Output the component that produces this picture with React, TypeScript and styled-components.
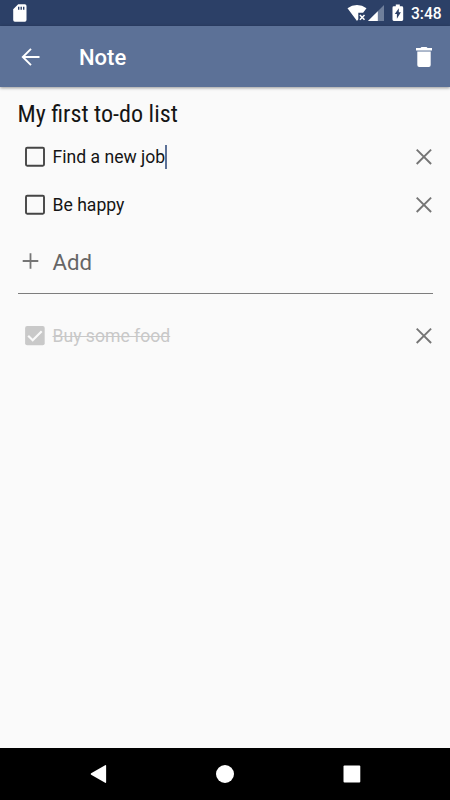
import React from 'react';
import styled, { createGlobalStyle } from 'styled-components';

const GlobalStyle = createGlobalStyle`
  * { box-sizing: border-box; }
  body { margin: 0; background: #fafafa; }
`;

const Screen = styled.div`
  display: flex;
  flex-direction: column;
  width: 450px;
  height: 800px;
  overflow: hidden;
  background: #fafafa;
  font-family: Roboto, sans-serif;
  color: #151515;
`;

const StatusBar = styled.header`
  display: flex;
  flex: none;
  align-items: center;
  height: 26px;
  padding: 0 9px 0 12px;
  background: #2c4067;
`;

const StatusIcons = styled.div`
  display: flex;
  align-items: center;
  margin-left: auto;
`;

const Clock = styled.span`
  width: 30px;
  margin-left: 7px;
  padding-top: 2px;
  color: #fff;
  font-size: 15.6px;
  font-weight: 500;
  line-height: 26px;
  white-space: nowrap;
`;

const AppBar = styled.nav`
  display: flex;
  flex: none;
  align-items: center;
  height: 61px;
  padding: 0 12px 0 17px;
  background: #5c7197;
  box-shadow: 0 1px 3px rgba(0, 0, 0, 0.4);
`;

const AppTitle = styled.h1`
  flex: 1;
  margin: 3px 0 0 34px;
  color: #fff;
  font-size: 22px;
  font-weight: 500;
  line-height: 30px;
`;

const IconButton = styled.button`
  display: flex;
  flex: none;
  padding: 0;
  border: 0;
  background: none;
`;

const Note = styled.main`
  flex: 1;
  padding: 10px 12px 0 17.5px;
`;

const NoteTitle = styled.h2`
  margin: 0;
  height: 35.6px;
  font-family: 'Roboto Condensed', Roboto, sans-serif;
  font-size: 24.1px;
  font-stretch: 75%;
  font-weight: 400;
  line-height: 34px;
  white-space: nowrap;
`;

const Item = styled.div`
  display: flex;
  align-items: center;
  height: 48px;
  padding-left: 5.5px;
`;

const ItemText = styled.span<{ $done?: boolean }>`
  display: flex;
  flex: 1;
  align-items: center;
  margin-left: 5.5px;
  font-size: 17.6px;
  line-height: 24px;
  color: ${(p) => (p.$done ? '#c8c8c8' : '#151515')};
  text-decoration: ${(p) => (p.$done ? 'line-through' : 'none')};
  text-decoration-thickness: 1px;
`;

const Caret = styled.span`
  flex: none;
  width: 2px;
  height: 24px;
  margin-left: -0.5px;
  background: #5c7197;
`;

const AddRow = styled.button`
  display: flex;
  align-items: center;
  width: 100%;
  height: 64.4px;
  padding: 0 0 0 0.5px;
  border: 0;
  background: none;
  color: #666;
  font-family: inherit;
  font-size: 22.2px;
  line-height: 30px;
`;

const AddLabel = styled.span`
  margin: 2px 0 0 10.5px;
`;

const Divider = styled.hr`
  height: 1px;
  margin: 0 5.5px 18px 0;
  border: 0;
  background: #7d7d7d;
`;

const NavBar = styled.footer`
  display: flex;
  flex: none;
  align-items: center;
  justify-content: space-between;
  height: 52px;
  padding: 0 88px 0 88px;
  background: #000;
`;

const Checkbox = ({ checked = false }: { checked?: boolean }) => (
  <svg width="24" height="24" viewBox="0 0 24 24">
    {checked ? (
      <>
        <rect x="2.1" y="1.9" width="19.6" height="19.4" rx="2" fill="#c9c9c9" />
        <path d="M5.2 11.8l4.5 4.4 9-9" fill="none" stroke="#fafafa" strokeWidth="2.2" />
      </>
    ) : (
      <rect x="3" y="2.8" width="18" height="18" rx="1.2" fill="none" stroke="#454545" strokeWidth="1.9" />
    )}
  </svg>
);

const RemoveButton = () => (
  <IconButton aria-label="Remove">
    <svg width="27" height="27" viewBox="0 0 27 27">
      <path d="M5.7 6.6l14.4 14.4M20.1 6.6L5.7 21" stroke="#757575" strokeWidth="1.9" />
    </svg>
  </IconButton>
);

const BackIcon = () => (
  <svg width="28" height="28" viewBox="0 0 28 28">
    <path d="M22.5 14H6.3M14 5.8L5.8 14l8.2 8.2" fill="none" stroke="#fff" strokeWidth="1.9" />
  </svg>
);

const TrashIcon = () => (
  <svg width="28" height="28" viewBox="0 0 28 28">
    <path d="M7.3 8.9h13.4v13.2q0 1.9-1.9 1.9H9.2q-1.9 0-1.9-1.9zM6 5h4.4l1.1-1h5l1.1 1H22v2.4H6z" fill="#fff" />
    <path d="M7.3 7.4h13.4v1.5H7.3z" fill="#b4bfd1" />
  </svg>
);

const StorageIcon = () => (
  <svg width="16" height="20" viewBox="0 0 16 20">
    <path d="M6.2 1.3h6.6q1.7 0 1.7 1.7v14q0 1.7-1.7 1.7H2.9q-1.7 0-1.7-1.7V6.3z" fill="#fff" />
    <path d="M6.7 3.8v3M9.2 3.8v3M11.7 3.8v3" stroke="#2c4067" strokeWidth="1.4" />
  </svg>
);

const WifiIcon = () => (
  <svg width="20" height="18" viewBox="0 0 20 18">
    <path d="M0.5 4.2Q4.8 1 10 1t9.5 3.2L16.1 8.8h-4.8v6.5L10 17z" fill="#fff" />
    <path d="M12.9 11l4.6 4.7M17.5 11l-4.6 4.7" stroke="#fff" strokeWidth="1.5" />
  </svg>
);

const SignalIcon = () => (
  <svg width="16" height="18" viewBox="0 0 16 18">
    <path d="M16 1v16H0z" fill="#6f7f9b" />
    <path d="M9.8 7.2V17H0z" fill="#fff" />
  </svg>
);

const BatteryIcon = () => (
  <svg width="12" height="18" viewBox="0 0 12 18">
    <path d="M3.8 0.6h4v1.7h2q1.4 0 1.4 1.4v11.9q0 1.4-1.4 1.4h-8q-1.3 0-1.3-1.4V3.7q0-1.4 1.3-1.4h2z" fill="#fff" />
    <path d="M6.8 4.3v4h2.1l-4 6.4v-4.6H2.8z" fill="#2c4067" />
  </svg>
);

const Gap = styled.span<{ $w: number }>`
  width: ${(p) => p.$w}px;
`;

export default function App() {
  return (
    <Screen>
      <GlobalStyle />
      <StatusBar>
        <StorageIcon />
        <StatusIcons>
          <WifiIcon />
          <Gap $w={1} />
          <SignalIcon />
          <Gap $w={8} />
          <BatteryIcon />
          <Clock>3:48</Clock>
        </StatusIcons>
      </StatusBar>
      <AppBar>
        <IconButton aria-label="Back"><BackIcon /></IconButton>
        <AppTitle>Note</AppTitle>
        <IconButton aria-label="Delete"><TrashIcon /></IconButton>
      </AppBar>
      <Note>
        <NoteTitle>My first to-do list</NoteTitle>
        <Item>
          <Checkbox />
          <ItemText>Find a new job<Caret /></ItemText>
          <RemoveButton />
        </Item>
        <Item>
          <Checkbox />
          <ItemText>Be happy</ItemText>
          <RemoveButton />
        </Item>
        <AddRow>
          <svg width="24" height="24" viewBox="0 0 24 24">
            <path d="M12.5 4.2v15.6M4.7 12h15.6" stroke="#757575" strokeWidth="1.8" />
          </svg>
          <AddLabel>Add</AddLabel>
        </AddRow>
        <Divider />
        <Item>
          <Checkbox checked />
          <ItemText $done>Buy some food</ItemText>
          <RemoveButton />
        </Item>
      </Note>
      <NavBar>
        <svg width="20" height="20" viewBox="0 0 20 20">
          <path d="M3.1 9.2L17.1 1.2q1-.4 1 .6v16.4q0 1-1 .6L3.1 10.8q-1-.8 0-1.6z" fill="#fff" />
        </svg>
        <svg width="20" height="20" viewBox="0 0 20 20">
          <circle cx="10" cy="10" r="9" fill="#fff" />
        </svg>
        <svg width="20" height="20" viewBox="0 0 20 20">
          <rect x="1.5" y="1.4" width="16.8" height="17" rx="1" fill="#fff" />
        </svg>
      </NavBar>
    </Screen>
  );
}
